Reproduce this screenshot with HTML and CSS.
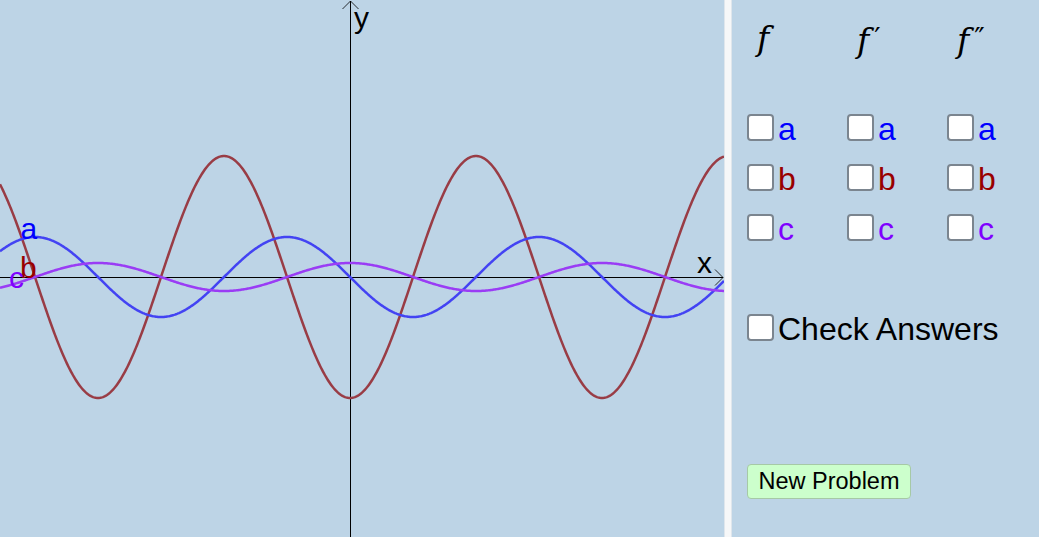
FILE: index.html
```html
<!DOCTYPE html>
<html>
<head>
<meta charset="utf-8">
<link rel="stylesheet" href="styles.css">
</head>
<body>
<div class="app">
  <div class="graph">
    <svg class="plot" width="724" height="537" viewBox="0 0 724 537">
      <line class="axis" x1="0" y1="277.5" x2="723" y2="277.5"/>
      <line class="axis" x1="350.5" y1="1" x2="350.5" y2="537"/>
      <polyline class="arrow" points="342.5,9 350.5,1 358.5,9"/>
      <polyline class="arrow" points="715,269.5 723,277.5 715,285.5"/>
      <path id="curve-b" class="curve curve-b" d=""/>
      <path id="curve-a" class="curve curve-a" d=""/>
      <path id="curve-c" class="curve curve-c" d=""/>
      <text class="lbl lbl-a" x="20.5" y="239">a</text>
      <text class="lbl lbl-b" x="20" y="278">b</text>
      <text class="lbl lbl-c" x="9" y="288">c</text>
      <text class="lbl lbl-axis" x="354" y="28">y</text>
      <text class="lbl lbl-axis" x="697" y="272.5">x</text>
    </svg>
  </div>
  <div class="divider"></div>
  <div class="panel">
    <div class="heads">
      <div class="head">f</div>
      <div class="head">f<span class="prime">′</span></div>
      <div class="head">f<span class="prime">″</span></div>
    </div>
    <div class="choices">
      <label class="opt"><input type="checkbox" class="box"><span class="t ta">a</span></label>
      <label class="opt"><input type="checkbox" class="box"><span class="t ta">a</span></label>
      <label class="opt"><input type="checkbox" class="box"><span class="t ta">a</span></label>
      <label class="opt"><input type="checkbox" class="box"><span class="t tb">b</span></label>
      <label class="opt"><input type="checkbox" class="box"><span class="t tb">b</span></label>
      <label class="opt"><input type="checkbox" class="box"><span class="t tb">b</span></label>
      <label class="opt"><input type="checkbox" class="box"><span class="t tc">c</span></label>
      <label class="opt"><input type="checkbox" class="box"><span class="t tc">c</span></label>
      <label class="opt"><input type="checkbox" class="box"><span class="t tc">c</span></label>
    </div>
    <label class="opt check"><input type="checkbox" class="box"><span class="t">Check Answers</span></label>
    <button class="newbtn">New Problem</button>
  </div>
</div>
<script src="graph.js"></script>
</body>
</html>
```

FILE: styles.css
```css
html, body {
  margin: 0;
  padding: 0;
}
body {
  width: 1039px;
  height: 537px;
  overflow: hidden;
  background: #bdd4e6;
  font-family: "Liberation Sans", Arial, sans-serif;
}
.app {
  display: flex;
  height: 537px;
}
.graph {
  width: 724px;
  height: 537px;
  background: #bdd4e6;
  flex: none;
}
.plot {
  display: block;
}
.axis {
  stroke: #000;
  stroke-width: 1;
}
.arrow {
  fill: none;
  stroke: #000;
  stroke-width: 0.8;
}
.curve {
  fill: none;
  stroke-width: 2.5;
  stroke-linejoin: round;
}
.curve-a { stroke: #4343f3; }
.curve-b { stroke: #993c45; }
.curve-c { stroke: #9a3cf5; }
.lbl {
  font-family: "Liberation Sans", Arial, sans-serif;
  font-size: 30px;
}
.lbl-a { fill: #0000ff; }
.lbl-b { fill: #990000; }
.lbl-c { fill: #7f00ff; }
.lbl-axis { fill: #000; }

.divider {
  width: 6px;
  flex: none;
  background: #f6f7f8;
  border-left: 1px solid #dfe6ec;
  border-right: 1px solid #dfe6ec;
}
.panel {
  flex: 1;
  padding: 19px 0 0 15px;
}
.heads {
  display: grid;
  grid-template-columns: repeat(3, 100px);
  height: 40px;
}
.head {
  padding-left: 10px;
  font-family: "DejaVu Serif", "Liberation Serif", serif;
  font-style: italic;
  font-size: 33px;
  line-height: 40px;
  color: #000;
}
.prime {
  font-style: normal;
  font-size: 28px;
  margin-left: 5px;
  letter-spacing: -2px;
  vertical-align: 4px;
}
.choices {
  display: grid;
  grid-template-columns: repeat(3, 100px);
  row-gap: 24px;
  margin-top: 55px;
}
.opt {
  display: flex;
  align-items: flex-start;
  height: 26px;
}
.box {
  appearance: none;
  -webkit-appearance: none;
  margin: 0;
  width: 27px;
  height: 27px;
  box-sizing: border-box;
  border: 2px solid #7b858f;
  border-radius: 4px;
  background: #fff;
  flex: none;
}
.t {
  font-size: 32px;
  line-height: 26px;
  margin-top: 2px;
  margin-left: 4px;
  color: #000;
  white-space: nowrap;
}
.ta { color: #0000ff; }
.tb { color: #990000; }
.tc { color: #7f00ff; }
.check {
  margin-top: 74px;
}
.newbtn {
  display: block;
  margin: 124px 0 0 0;
  width: 164px;
  height: 35px;
  box-sizing: border-box;
  padding: 0;
  background: #ccffcc;
  border: 1px solid #a6c9a6;
  border-radius: 4px;
  font-family: "Liberation Sans", Arial, sans-serif;
  font-size: 23.5px;
  line-height: 33px;
  color: #000;
  text-align: center;
}
```

FILE: graph.js
```javascript
(function () {
  var cx = 350, cy = 277, period = 252;
  function build(fn) {
    var d = "";
    for (var x = 0; x <= 724; x += 1) {
      var th = 2 * Math.PI * (x - cx) / period;
      var y = cy + fn(th);
      d += (x === 0 ? "M" : "L") + x + " " + y.toFixed(2) + " ";
    }
    return d;
  }
  document.getElementById("curve-c").setAttribute("d", build(function (t) { return -14 * Math.cos(t); }));
  document.getElementById("curve-a").setAttribute("d", build(function (t) { return 40 * Math.sin(t); }));
  document.getElementById("curve-b").setAttribute("d", build(function (t) { return 121 * Math.cos(t); }));
})();
```
